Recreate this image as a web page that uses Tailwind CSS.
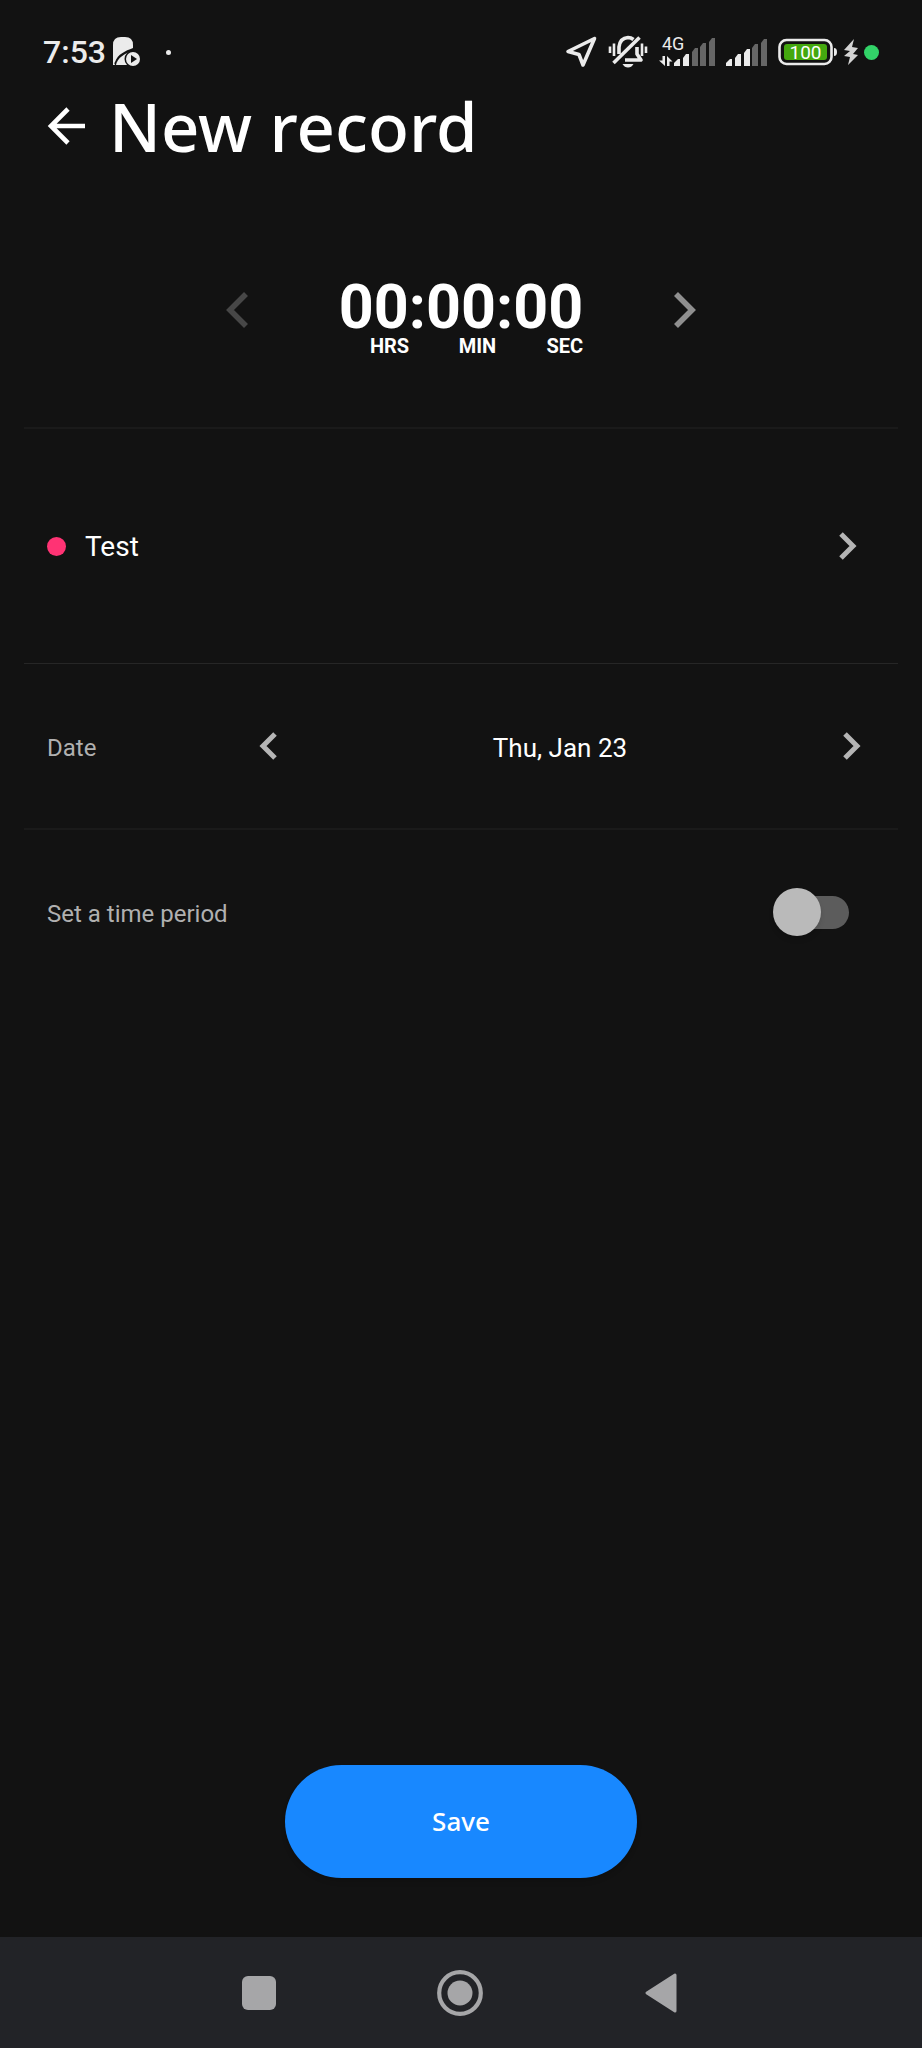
<!DOCTYPE html>
<html lang="en">
<head>
<meta charset="utf-8">
<meta name="viewport" content="width=device-width, initial-scale=1">
<title>New record</title>
<script src="https://cdn.jsdelivr.net/npm/@tailwindcss/browser@4"></script>
</head>
<body class="flex min-h-screen flex-col bg-[#121212] font-[Roboto,sans-serif] text-white">

<!-- Status bar -->
<div class="flex h-[84px] items-center justify-between px-[43px] pt-[20px] text-[#ebebeb]">
  <div class="flex items-center">
    <span class="text-[32px] leading-8 font-medium">7:53</span>
    <svg class="ml-[7px] h-[32px] w-[28px]" viewBox="0 0 28 32" fill="none">
      <path d="M0 9Q0 1 8 1H12Q20 1 20 9V12C12 15 5 18 2 26L0 29Z" fill="currentColor"/>
      <path d="M3 29C4 22 12 17 20 15L22 17L16 29Z" fill="currentColor"/>
      <path d="M0 24V29H2Z" fill="currentColor"/>
      <circle cx="20" cy="23" r="8.500" fill="#121212"/>
      <circle cx="20" cy="23" r="7" fill="currentColor"/>
      <path d="M18 19L24 23L18 27Z" fill="#121212"/>
    </svg>
    <span class="ml-[25px] size-[5px] rounded-full bg-[#ebebeb]"></span>
  </div>
  <div class="flex items-center">
    <svg class="h-[32px] w-[32px]" viewBox="0 0 32 32" fill="none" stroke="currentColor" stroke-width="3.600" stroke-linejoin="round"><path d="M29.500 2.500L3 15.500L14 18.500L18 29Z"/></svg>
    <svg class="ml-[11px] h-[34px] w-[40px]" viewBox="0 0 40 34" fill="none" stroke="currentColor" stroke-width="3.600" stroke-linejoin="round">
      <path d="M11 19V12Q12 3 20 2.500Q23 2.500 25.500 4.500M29 12V19L33 25H17"/>
      <path d="M5.500 28L31.500 2.500"/>
      <path d="M2 11.500V18M6 8.500V21M34 8.500V21M38 11.500V18" stroke-width="2.600"/>
      <path d="M14.500 29H25.500Q23.500 32.500 20 32.500Q16.500 32.500 14.500 29Z" fill="currentColor" stroke="none"/>
    </svg>
    <svg class="ml-[11px] h-[30px] w-[57px] overflow-visible" viewBox="0 0 57 30" fill="currentColor">
      <text x="3" y="13" font-family="Roboto" font-size="18">4G</text>
      <path d="M3.500 19H6V29L0 23.500H3.500ZM8 29V19L13.500 24.500H10.500V29Z"/>
      <path d="M15 26L19 22H21V29H15ZM24 21L27 17H30V29H24Z"/>
      <path d="M33 15L36 11H39V29H33ZM41 10L44 6H47V29H41ZM50 5L53 1H56V29H50Z" fill="#666"/>
    </svg>
    <svg class="ml-[10px] h-[30px] w-[41px]" viewBox="0 0 41 30" fill="currentColor">
      <path d="M0 26L4 22H6V29H0ZM9 21L12 17H15V29H9ZM18 16L21 12H24V29H18Z"/>
      <path d="M26 11L29 7H32V29H26ZM35 6L38 2H41V29H35Z" fill="#666"/>
    </svg>
    <svg class="ml-[11px] h-[28px] w-[60px]" viewBox="0 0 60 28">
      <rect x="1.500" y="2" width="52" height="24" rx="7" fill="none" stroke="#ebebeb" stroke-width="2.600"/>
      <rect x="6" y="6" width="43" height="16" rx="3" fill="#44a80f"/>
      <path d="M56 10Q59 10 59 14T56 18Z" fill="#ebebeb"/>
      <text x="27.500" y="20.500" text-anchor="middle" font-family="Roboto" font-size="19" fill="#fff">100</text>
    </svg>
    <svg class="ml-[6px] h-[28px] w-[14px]" viewBox="0 0 14 28" fill="#d4d4d4"><path d="M10 1L0 12L6 13L0 18L6 19L4 27L14 17L9 16L14 10L8 9Z"/></svg>
    <span class="ml-[6px] size-[15px] rounded-full bg-[#32d368]"></span>
  </div>
</div>

<header class="flex h-[84px] items-center pl-[42px]">
  <button type="button" aria-label="Back" class="flex size-[48px] items-center justify-center">
    <svg class="size-[38px]" viewBox="0 0 38 38" fill="none" stroke="#fff" stroke-width="4.600"><path d="M38 19H4M21 2L4 19L21 36"/></svg>
  </button>
  <h1 class="ml-[19px] font-['Noto_Sans',sans-serif] text-[67px] leading-[80px] font-medium">New record</h1>
</header>

<main class="flex flex-1 flex-col px-[24px]">
  <!-- Duration -->
  <section class="flex h-[261px] items-center justify-center border-b-2 border-[#1a1a1a] pt-[25px]" aria-label="Duration">
    <button type="button" aria-label="Previous" class="flex size-[48px] items-center justify-center text-[#474747]">
      <svg class="h-[36px] w-[22px]" viewBox="0 0 22 36" fill="none" stroke="currentColor" stroke-width="5.600"><path d="M20 2L4 18L20 34"/></svg>
    </button>
    <div class="mx-[78px] flex flex-col items-end pt-[16px]">
      <div class="text-[61px] leading-[56px] font-bold">00:00:00</div>
      <div class="grid grid-cols-[70px_87px_87px] text-right text-[20px] leading-[22px] font-bold">
        <span>HRS</span><span>MIN</span><span>SEC</span>
      </div>
    </div>
    <button type="button" aria-label="Next" class="flex size-[48px] items-center justify-center text-[#8f8f8f]">
      <svg class="h-[36px] w-[22px]" viewBox="0 0 22 36" fill="none" stroke="currentColor" stroke-width="5.600"><path d="M2 2L18 18L2 34"/></svg>
    </button>
  </section>

  <!-- Activity -->
  <button type="button" class="flex h-[235px] items-center border-b border-[#262626] pr-[41px] pl-[23px] text-left">
    <span class="size-[19px] rounded-full bg-[#ff3374]"></span>
    <span class="ml-[19px] flex-1 pt-[2px] text-[28px] leading-8">Test</span>
    <svg class="h-[28px] w-[18px]" viewBox="0 0 18 28" fill="none" stroke="#b5b5b5" stroke-width="5"><path d="M2 2L14 14L2 26"/></svg>
  </button>

  <!-- Date -->
  <section class="flex h-[166px] items-center border-b-2 border-[#1a1a1a] pr-[22px] pl-[23px]">
    <span class="w-[197px] pt-[3px] text-[24px] leading-8 text-[#b0b0b0]">Date</span>
    <button type="button" aria-label="Previous day" class="flex size-[48px] items-center justify-center">
      <svg class="h-[28px] w-[18px]" viewBox="0 0 18 28" fill="none" stroke="#b5b5b5" stroke-width="5"><path d="M16 2L4 14L16 26"/></svg>
    </button>
    <span class="flex-1 pt-[3px] text-center text-[26px] leading-8">Thu, Jan 23</span>
    <button type="button" aria-label="Next day" class="flex size-[48px] items-center justify-center">
      <svg class="h-[28px] w-[18px]" viewBox="0 0 18 28" fill="none" stroke="#b5b5b5" stroke-width="5"><path d="M2 2L14 14L2 26"/></svg>
    </button>
  </section>

  <!-- Time period switch -->
  <label class="flex h-[164px] items-center justify-between pr-[49px] pl-[23px] text-[24px] leading-8 text-[#b0b0b0]">
    <span class="pt-[3px]">Set a time period</span>
    <span class="relative flex h-[48px] w-[76px] items-center justify-end">
      <input type="checkbox" role="switch" class="peer h-[33px] w-[68px] appearance-none rounded-full bg-[#5c5c5c]">
      <span class="absolute left-0 size-[48px] rounded-full bg-[#bababa] shadow-md peer-checked:left-[28px]"></span>
    </span>
  </label>

  <div class="mt-auto flex justify-center pb-[59px]">
    <button type="button" class="h-[113px] w-[352px] rounded-full bg-[#1888ff] font-['Noto_Sans',sans-serif] text-[26px] font-medium shadow-md">Save</button>
  </div>
</main>

<!-- System navigation -->
<nav class="flex h-[111px] items-center justify-center bg-[#222327] pr-[2px] text-[#a6a6a8]" aria-label="System">
  <button type="button" aria-label="Recent apps" class="flex h-full w-[201px] items-center justify-center"><span class="size-[34px] rounded-[6px] bg-[#a6a6a8]"></span></button>
  <button type="button" aria-label="Home" class="flex h-full w-[201px] items-center justify-center">
    <svg class="size-[46px]" viewBox="0 0 46 46"><circle cx="23" cy="23" r="20.800" fill="none" stroke="currentColor" stroke-width="4.200"/><circle cx="23" cy="23" r="12.500" fill="currentColor"/></svg>
  </button>
  <button type="button" aria-label="Back" class="flex h-full w-[201px] items-center justify-center">
    <svg class="h-[40px] w-[32px]" viewBox="0 0 32 40" fill="currentColor" stroke="currentColor" stroke-width="3" stroke-linejoin="round"><path d="M30 2V38L2 20Z"/></svg>
  </button>
</nav>
</body>
</html>
